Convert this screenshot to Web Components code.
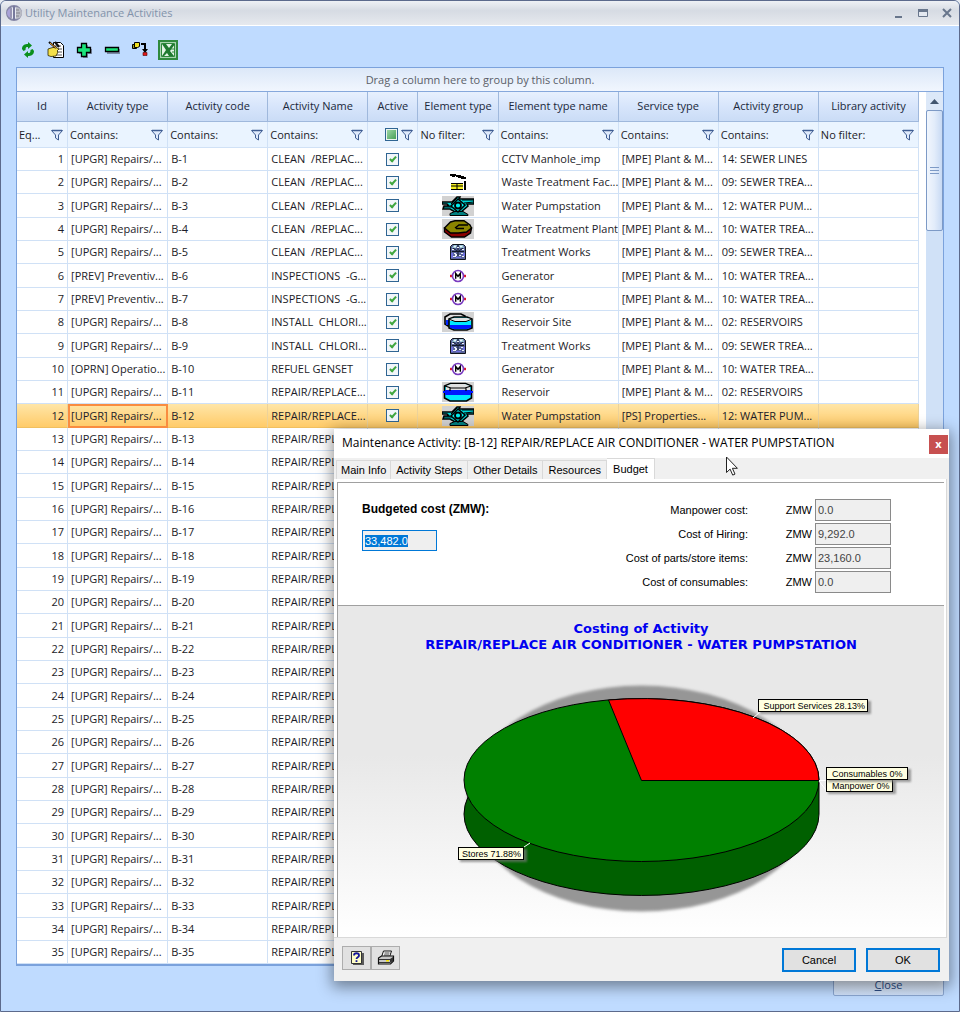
<!DOCTYPE html>
<html lang="en">
<head>
<meta charset="utf-8">
<title>Utility Maintenance Activities</title>
<style>
body { margin: 0; background: #e6ebf2; font: 11px/16px "Open Sans", "Noto Sans", sans-serif; color: #1c1c28; }
</style>
</head>
<body>
<app-window caption="Utility Maintenance Activities">
  <tool-bar></tool-bar>
  <activity-grid></activity-grid>
  <close-bar></close-bar>
</app-window>
<maintenance-dialog>
  <cost-form></cost-form>
  <cost-chart></cost-chart>
</maintenance-dialog>

<script>
function component(name, css, html, setup) {
  customElements.define(name, class extends HTMLElement {
    constructor() {
      super();
      this.attachShadow({ mode: "open" });
    }
    connectedCallback() {
      if (this.shadowRoot.childNodes.length) return;
      const t = document.createElement("template");
      t.innerHTML = "<style>*,:host{box-sizing:border-box}" + css + "</style>" + (typeof html === "function" ? html(this) : html);
      this.shadowRoot.append(t.content.cloneNode(true));
      if (setup) setup(this, this.shadowRoot);
    }
  });
}

/* ---------- icons ---------- */
const M_ICON = '<path stroke="#e01828" stroke-width="2.400" d="M0 8h16"/><circle cx="8" cy="8" r="5.500" fill="#fff" stroke="#7a3cc0" stroke-width="1.600"/><path fill="none" stroke="#000" stroke-width="1.400" d="M5.700 10.800V5.500L8 8.300l2.300-2.800v5.300"/>';
const WORKS = '<path fill="#59649a" stroke="#10141c" d="M.5 2.500l2-2h11l2 2v13H.5z"/><path fill="#a4d0dc" d="M2 4l2-3h3L6 4zM9 1h4l1 3h-4z"/><path stroke="#111827" fill="none" d="M8 0v12M3 4l4 3M13 4l-4 3M2 7.500h12"/><path fill="#eef2fa" d="M2 5h2v1H2zM12 5h2v1h-2zM4 2h2v1H4zM10 2h2v1h-2zM4 9h2v1H4zM5 10h2v2H5zM3 12h3v1H3zM11 9h2v1h-2zM9 11h2v1H9zM12 12h2v1h-2zM7 3h2v1H7z"/><path fill="#6f6fe0" d="M1 9h2v5H1zM13 9h2v3h-2zM6 13h5v1H6z"/>';
const ICONS = {
  waste: [16, 16, '<path d="M0 0h6v2H5v1H2V2H0zM6 1h5v1h3v1h2v2h-5V4H8V3H6zM14 7h2v9h-2z"/><path fill="#f4ee20" d="M1 9h12v6H1z"/><path fill="none" stroke="#000" d="M1 9.500h12M1 12h12M7 9v6M1 15.500h12"/>'],
  pump: [32, 20, '<path fill="#d2d2d2" d="M0 0h32v20H0z"/><path fill="#00d8d8" stroke="#000" stroke-width="1.500" d="M0 6h10L15 1h3l-1 2h15v5h-7l1 2-7 6h-6l-5-3H1l1-3h5L5 8H0z"/><path fill="#008080" stroke="#000" d="M8 19.500v-2l5-2h8l5 3v1z"/><path stroke="#000" fill="none" d="M20 4h12M9 8l6-6M22 7l10-1M2 11h8l4-6M14 6l6 3-3 5"/><path d="M16 3l7 6-7 7-7-6z" fill="#00f0f0" stroke="#000" stroke-width="1.600"/><circle cx="16" cy="9.500" r="3" fill="#00f0f0" stroke="#000" stroke-width="1.800"/>'],
  plant: [32, 20, '<path fill="#d2d2d2" d="M0 0h32v20H0z"/><path fill="#8b0000" stroke="#000" stroke-width="1.400" d="M2.500 9v4l7 5h13l6-4 1-5z"/><path fill="#8b8500" stroke="#000" stroke-width="1.400" d="M2.500 9l6-6L13 1.800h9L28 6l1.500 3-5 4-8 1h-8z"/><path fill="none" stroke="#000" stroke-width="1.400" d="M13 9l4-3h9M14 9.500h8"/>'],
  works: [16, 16, WORKS],
  generator: [16, 16, M_ICON],
  site: [32, 20, '<path fill="#d2d2d2" d="M0 0h32v20H0z"/><path fill="#e0e0e0" stroke="#000" stroke-width="1.600" d="M3 5l5-3h11l4 2v10H6l-3-2z"/><path fill="#0028ff" d="M4 8h3v5H4z"/><path fill="#00e8ff" stroke="#000" stroke-width="1.600" d="M7 7l5-2h13l5 2v9l-5 2H12l-5-2z"/><path fill="#e0e0e0" d="M8 7l4-1h13l4 1v2H8z"/><path fill="#0018ff" d="M8 13h21v3l-4 1H12l-4-1z"/><path fill="none" stroke="#000" d="M8 7.500l5 2h11l5-2"/>'],
  reservoir: [32, 20, '<path fill="#d2d2d2" d="M0 0h32v20H0z"/><path fill="#00e8ff" stroke="#000" stroke-width="1.600" d="M2.500 4l6-2.500h15l6 2.500v12l-5 3H8l-5.500-3z"/><path fill="#e0e0e0" d="M4 4l5-2h14l5 2v4H4z"/><path fill="#0018ff" d="M3 8h26v5H3zM1 9h30v2H1z"/><path fill="none" stroke="#000" stroke-width="1.200" d="M3 4l6 2h14l6-2M8 6v3M24 6v3"/>'],
  refresh: [14, 16, '<path fill="#0b8f1c" d="M1 7c0-4 3-5 6-5V0l4 3.500L7 7V5C5 5 4.500 5.500 4.500 8L2.500 9zM13 9c0 4-3 5-6 5v2l-4-3.500L7 9v2c2 0 2.500-.5 2.500-3l2-1z"/>'],
  edit: [18, 18, '<path fill="#fff" stroke="#000" d="M6.500 1.500h7l3 3v12h-10z"/><path stroke="#555" d="M8 5h6M9 8h6M10 11h5M9 14h6"/><path fill="#f4e04a" stroke="#2b2400" stroke-width=".8" d="M1 8l3-1 4-1 4 2-2 2 1 1-1 2-1 2-5 .500-3-1z"/><path stroke="#111" stroke-width="2.200" d="M2 1l7 6M8 1l4 5"/><path stroke="#f7a52a" stroke-width="1" d="M3 2l6 5"/>'],
  add: [18, 18, '<path fill="#7b8ba6" d="M8 4h5v4h4v5h-4v4H8v-4H4V8h4z"/><path fill="#1be37a" stroke="#000" stroke-width="1.300" d="M6.500 2.500h5v4h4v5h-4v4h-5v-4h-4v-5h4z"/>'],
  remove: [18, 18, '<path fill="#7b8ba6" d="M4 8h13v5H4z"/><path fill="#1be37a" stroke="#000" stroke-width="1.300" d="M2.500 6.500h13v4h-13z"/>'],
  move: [18, 18, '<path fill="#9a9a20" stroke="#000" d="M1.500 3.500h4v4h-4z"/><path fill="#f0e020" stroke="#000" d="M3.500 1.500h5v4l-2 1h-3z"/><path fill="none" stroke="#000" stroke-width="2" d="M10 3h4v7"/><path d="M11 8h6l-3 4z"/><path fill="#e01818" stroke="#500" stroke-width=".6" d="M12 11.500h4v3h-4z"/>'],
  excel: [20, 20, '<path fill="#a8d4b0" stroke="#2f8a3c" stroke-width="2" d="M1 1h18v18H1z"/><path fill="#e3f4e5" stroke="#2f8a3c" d="M3.500 3.500h13v13h-13z"/><path fill="#1f7a30" d="M4 4h4l3 4 3-4h3l-5 7 4 5h-5l-2-3-3 3H4l4-6z"/><path stroke="#2f8a3c" d="M13 9h3M14 12h3"/>'],
  filter: [12, 12, '<path fill="#dfeafb" stroke="#3f5d92" d="M.5 1.500h11L7.500 6v5l-3-2V6z"/><path stroke="#3f5d92" d="M1 1.500h10" stroke-width="1.400"/>'],
  help: [16, 16, '<path fill="#5a5a5a" d="M4 3h11v12H4z"/><path fill="#ffffc8" stroke="#333" d="M2.500 1.500h10v12h-10z"/><path fill="none" stroke="#16169a" stroke-width="1.800" d="M5 5.500c0-3 5-3 5 0 0 2-2.500 1.500-2.500 3.500"/><path fill="#16169a" d="M6.600 10.200h1.800V12H6.600z"/>'],
  print: [18, 16, '<path fill="#fff" stroke="#111" d="M6.500 1h8l-2 6h-8z"/><path stroke="#111" stroke-width=".8" d="M7.500 3h5M7 5h5"/><path fill="#c8c8c8" stroke="#111" stroke-width="1.200" d="M1.500 8l3-2h12v5l-3 3h-12z"/><path fill="#333" d="M2 9h11v1H2zM2 12h11v1H2zM13 9l3-2v4l-3 2z"/><path fill="#f5e400" d="M9 10h3v1.500H9z"/>']
};
component("ui-icon", ":host{display:inline-block;vertical-align:middle;line-height:0}svg{display:block}", el => {
  const [w, h, body] = ICONS[el.getAttribute("name")];
  return `<svg width="${w}" height="${h}" viewBox="0 0 ${w} ${h}" fill="#000" aria-hidden="true">${body}</svg>`;
});

/* ---------- main window ---------- */
component("app-window", `
:host{display:flex;flex-direction:column;min-height:100vh;border:1px solid #5c6a8c;border-radius:6px 6px 0 0;background:#bfdbff;overflow:hidden}
header{display:flex;align-items:center;height:25px;padding:0 4px 0 5px;background:linear-gradient(#eef1f5,#d6dbe3 40%,#e6e9ee);border-bottom:1px solid #fff;color:#8293ab}
h1{flex:1;margin:0 0 0 3px;font:inherit}
nav{display:flex;gap:8px}
nav button{width:16px;height:16px;padding:0;border:0;background:none}
nav svg{display:block;margin:auto}
main{flex:1;display:flex;flex-direction:column;padding:0 15px}
`, el => `<header>
<svg width="16" height="16" viewBox="0 0 16 16" aria-hidden="true"><circle cx="8" cy="8" r="7" fill="#e8eaf2" stroke="#8587a6" stroke-width="2"/><path d="M8 1v14" stroke="#77799c" stroke-width="2"/><path fill="#a9a2d8" d="M6 3a5 5 0 0 0 0 10z"/><path fill="#b9bbc4" d="M10 2a6 6 0 0 1 0 12z"/><path stroke="#85858f" fill="none" d="M10 5h3M10 8h4M10 11h3M5 3v10"/></svg>
<h1>${el.getAttribute("caption")}</h1>
<nav>
<button aria-label="Minimize"><svg width="10" height="10"><path fill="#68768c" d="M1 8h7v2H1z"/></svg></button>
<button aria-label="Maximize"><svg width="10" height="10"><path fill="#e3e8f0" stroke="#68768c" d="M.5 1.500h9v7h-9z"/><path fill="#68768c" d="M0 1h10v3H0z"/></svg></button>
<button aria-label="Close window"><svg width="10" height="10"><path stroke="#68768c" stroke-width="2" d="M1 1l8 8M9 1L1 9"/></svg></button>
</nav></header><main><slot></slot></main>`);

component("tool-bar", `
:host{display:flex;gap:8px;padding:13px 2px 6px}
button{display:flex;align-items:center;justify-content:center;width:20px;height:22px;padding:0;border:0;background:none}
`, [["refresh", "Refresh"], ["edit", "Edit"], ["add", "Add"], ["remove", "Remove"], ["move", "Move"], ["excel", "Export"]]
  .map(([n, l]) => `<button aria-label="${l}"><ui-icon name="${n}"></ui-icon></button>`).join(""));

const REP = "[UPGR] Repairs/...", PREV = "[PREV] Preventiv...", MPE = "[MPE] Plant & M...", RR = "REPAIR/REPLACE...";
const ROWS = [
  [REP, "CLEAN  /REPLAC...", "", "CCTV Manhole_imp", MPE, "14: SEWER LINES"],
  [REP, "CLEAN  /REPLAC...", "waste", "Waste Treatment Fac...", MPE, "09: SEWER TREA..."],
  [REP, "CLEAN  /REPLAC...", "pump", "Water Pumpstation", MPE, "12: WATER PUM..."],
  [REP, "CLEAN  /REPLAC...", "plant", "Water Treatment Plant", MPE, "10: WATER TREA..."],
  [REP, "CLEAN  /REPLAC...", "works", "Treatment Works", MPE, "09: SEWER TREA..."],
  [PREV, "INSPECTIONS  -G...", "generator", "Generator", MPE, "10: WATER TREA..."],
  [PREV, "INSPECTIONS  -G...", "generator", "Generator", MPE, "10: WATER TREA..."],
  [REP, "INSTALL  CHLORI...", "site", "Reservoir Site", MPE, "02: RESERVOIRS"],
  [REP, "INSTALL  CHLORI...", "works", "Treatment Works", MPE, "09: SEWER TREA..."],
  ["[OPRN] Operatio...", "REFUEL GENSET", "generator", "Generator", MPE, "10: WATER TREA..."],
  [REP, RR, "reservoir", "Reservoir", MPE, "02: RESERVOIRS"],
  [REP, RR, "pump", "Water Pumpstation", "[PS] Properties...", "12: WATER PUM..."]
];
while (ROWS.length < 35) ROWS.push([REP, "REPAIR/REPL", "", "", "", ""]);
const COLS = [["Id", 51, "Eq..."], ["Activity type", 100, "Contains:"], ["Activity code", 100, "Contains:"], ["Activity Name", 100, "Contains:"],
  ["Active", 50, null], ["Element type", 80, "No filter:"], ["Element type name", 120, "Contains:"], ["Service type", 100, "Contains:"],
  ["Activity group", 100, "Contains:"], ["Library activity", 100, "No filter:"]];
const esc = s => s.replace(/&/g, "&amp;");

component("activity-grid", `
:host{display:block;border:1px solid #7ba2dc;border-bottom-width:2px;background:#fff;overflow:hidden}
.group{height:24px;line-height:23px;text-align:center;color:#5b6068;background:linear-gradient(#dce8f8,#f1f6fe);border-bottom:1px solid #86a8dc}
.body{display:flex;gap:7px}
table{flex:1;min-width:0;width:100%;table-layout:fixed;border-collapse:separate;border-spacing:0}
th,td{padding:0 0 0 3px;border-right:1px solid #d0e1f6;border-bottom:1px solid #d0e1f6;overflow:hidden;white-space:pre;text-align:left;font-weight:400;line-height:20px}
thead th{height:30px;padding:0 0 2px;text-align:center;background:linear-gradient(#e7f0fe,#d7e5fb 50%,#cadcf6);border-color:#9fb8dc;color:#20283a}
thead td{height:26px;padding:0 4px 0 2px;background:#eaf4ff}
.f{display:flex;align-items:center;justify-content:space-between}
.f.mid{justify-content:flex-end;gap:3px}
.f button{flex:none;width:12px;height:12px;padding:0;border:0;background:none;line-height:0}
tbody tr{height:23px}
tbody tr:nth-child(3n){height:24px}
tbody td:first-child{text-align:right;padding:0 3px 0 0}
td.c{text-align:center;padding:0;line-height:0}
tr.sel{background:linear-gradient(#ffe6a8,#ffd98a 45%,#ffca66)}
tr.sel td{border-bottom-color:#f0c060;border-right-color:#ecd29a}
td.focus{outline:2px solid #f98c40;outline-offset:-2px}
input{appearance:none;display:inline-block;vertical-align:middle;position:relative;width:13px;height:13px;margin:0;border:1px solid #2f6593;background:#f2f6fa}
input:checked::before{content:"";position:absolute;left:4px;top:1px;width:2px;height:5px;border:solid #3fa63f;border-width:0 2px 2px 0;transform:rotate(42deg)}
input:indeterminate{background:linear-gradient(135deg,#a6dcae,#3e9a50);box-shadow:inset 0 0 0 1px #eef6f0}
.scroll{flex:none;width:17px;background:#d0e1f7}
.up{display:flex;align-items:center;justify-content:center;width:17px;height:18px;padding:0;border:0;background:#dce8f8}
.thumb{display:flex;align-items:center;justify-content:center;height:121px;border:1px solid #7d9ac6;border-radius:2px;background:linear-gradient(90deg,#f1f6fd,#e2ecfa 50%,#c8daf4)}
`, () => `<div class="group">Drag a column here to group by this column.</div>
<div class="body"><table>
<colgroup>${COLS.map(c => `<col style="width:${c[1]}px">`).join("")}</colgroup>
<thead><tr>${COLS.map(c => `<th scope="col">${c[0]}</th>`).join("")}</tr>
<tr>${COLS.map(c => `<td><div class="f${c[2] ? "" : " mid"}">${c[2] ? `<span>${c[2]}</span>` : '<input type="checkbox" class="any" aria-label="Filter active">'}<button aria-label="Filter ${c[0]}"><ui-icon name="filter"></ui-icon></button></div></td>`).join("")}</tr></thead>
<tbody>${ROWS.map((r, i) => `<tr${i === 11 ? ' class="sel"' : ""}><td>${i + 1}</td><td${i === 11 ? ' class="focus"' : ""}>${r[0]}</td><td>B-${i + 1}</td><td>${r[1]}</td><td class="c"><input type="checkbox" checked aria-label="Active ${i + 1}"></td><td class="c">${r[2] ? `<ui-icon name="${r[2]}"></ui-icon>` : ""}</td><td>${r[3]}</td><td>${esc(r[4])}</td><td>${r[5]}</td><td></td></tr>`).join("")}</tbody></table>
<div class="scroll"><button class="up" aria-label="Scroll up"><svg width="9" height="5"><path fill="#42566f" d="M4.500 0L9 5H0z"/></svg></button><div class="thumb"><svg width="9" height="7"><path stroke="#7d9ac6" d="M0 .500h9M0 3.500h9M0 6.500h9"/></svg></div></div></div>`,
(el, root) => { root.querySelector(".any").indeterminate = true; });

component("close-bar", `
:host{display:flex;justify-content:flex-end;padding:7px 0 15px}
button{width:111px;height:23px;padding:0;border:1px solid #8ba7d2;border-radius:2px;background:linear-gradient(#eaf2fd,#cfe1fa);color:#2c4d86;font:inherit}
`, `<button><u>C</u>lose</button>`);

/* ---------- dialog ---------- */
component("maintenance-dialog", `
:host{position:absolute;left:334px;right:11px;top:429px;background:#f0f0f0;box-shadow:0 4px 14px 2px rgba(0,0,0,.42);font:11px/16px "Liberation Sans",Arial,sans-serif;color:#000}
header{display:flex;align-items:center;height:29px;padding:0 1px 0 8px;background:#fff}
h2{flex:1;margin:0 0 2px;font:12px/26px "Open Sans","Noto Sans",sans-serif;white-space:nowrap}
.x{width:19px;height:19px;margin-top:1px;padding:0;border:0;background:#c75050;color:#fff;font:bold 11px/16px "Open Sans",sans-serif}
.tabs{display:flex;align-items:flex-end;height:21px;padding-left:2px}
.tabs button{height:19px;padding:0 5px;border:solid #d9d9d9;border-width:1px 1px 0 0;background:#f0f0f0;font:inherit;line-height:18px;color:#000;white-space:nowrap}
.tabs button:first-child{border-left-width:1px;padding:0 4px}
.tabs .on{height:21px;padding:0 6px;background:#fff}
.page{margin:0 2px 0 0;padding:3px 2px 0 3px;background:#fff;border:solid #d9d9d9;border-width:0 1px 1px 0}
.frame{border:solid #a0a0a0;border-width:1px 0 0 1px}
footer{display:flex;gap:10px;padding:8px 9px 9px 8px}
footer div{flex:1;display:flex}
footer div button{display:flex;align-items:center;justify-content:center;width:29px;height:24px;padding:0;border:1px solid #adadad;background:#e1e1e1}
footer>button{width:74px;height:24px;margin-top:2px;padding:0;border:2px solid #0078d7;background:#e1e1e1;font:inherit;color:#000}
.cursor{position:absolute;left:392px;top:27px}
`, `<header><h2>Maintenance Activity: [B-12] REPAIR/REPLACE AIR CONDITIONER - WATER PUMPSTATION</h2><button class="x" aria-label="Close dialog">x</button></header>
<div class="tabs" role="tablist"><button role="tab">Main Info</button><button role="tab">Activity Steps</button><button role="tab">Other Details</button><button role="tab">Resources</button><button role="tab" class="on" aria-selected="true">Budget</button></div>
<div class="page"><div class="frame"><slot></slot></div></div>
<footer><div><button aria-label="Help"><ui-icon name="help"></ui-icon></button><button aria-label="Print"><ui-icon name="print"></ui-icon></button></div><button>Cancel</button><button>OK</button></footer>
<svg class="cursor" width="13" height="21" aria-hidden="true"><path fill="#fff" stroke="#222" d="M.500 1v15.500l3.600-3.400 2.600 6 2.300-1-2.600-5.800h5z"/></svg>`);

component("cost-field", `
:host{display:grid;grid-template-columns:1fr 64px 3px 76px;align-items:center;height:22px}
label,span{text-align:right;white-space:nowrap}
input{grid-column:4;width:100%;height:22px;padding:0 2px;border:1px solid #8a8a8a;background:#efefef;color:#444;font:inherit}
`, el => `<label for="v">${el.getAttribute("label")}</label><span>ZMW</span><input id="v" value="${el.getAttribute("value")}" readonly>`);

component("cost-form", `
:host{display:flex;justify-content:space-between;height:123px;padding:16px 53px 0 24px;border-bottom:1px solid #a0a0a0}
label{display:block;font-weight:700;font-size:12px;line-height:20px}
.main{width:75px;height:21px;margin-top:11px;padding:0 2px;border:1px solid #0078d7;background:#efefef;font:inherit;outline:0;color:#000;display:block}
.main::selection{background:#0078d7;color:#fff}
.list{display:flex;flex-direction:column;gap:2px;width:270px}
`, `<div><label for="b">Budgeted cost (ZMW):</label><input id="b" class="main" value="33,482.0"></div>
<div class="list"><cost-field label="Manpower cost:" value="0.0"></cost-field><cost-field label="Cost of Hiring:" value="9,292.0"></cost-field><cost-field label="Cost of parts/store items:" value="23,160.0"></cost-field><cost-field label="Cost of consumables:" value="0.0"></cost-field></div>`,
(el, root) => { const b = root.querySelector(".main"); b.focus({ preventScroll: true }); b.select(); });

component("cost-chart", `
:host{display:block;padding-top:15px;background:linear-gradient(#e8e8e8 45%,#fff)}
h3{margin:0;text-align:center;color:#0000f0;font:bold 13px/16px "DejaVu Sans",Verdana,sans-serif}
svg{display:block;width:100%}
text{font:9px "Liberation Sans",Arial,sans-serif;fill:#000}
.tag{fill:#ffffe1;stroke:#000}
.sh{fill:#777;opacity:.7}
`, () => {
  const tag = (x, y, w, tx, s) => `<rect class="sh" x="${x + 2}" y="${y + 2}" width="${w + 1}" height="13" filter="url(#soft)"/><rect class="tag" x="${x + .5}" y="${y + .5}" width="${w - 1}" height="12"/><text x="${tx}" y="${y + 10}">${s}</text>`;
  return `<h3>Costing of Activity<br>REPAIR/REPLACE AIR CONDITIONER - WATER PUMPSTATION</h3>
<svg viewBox="338 653 606 284" role="img" aria-label="Costing pie chart">
<filter id="blur"><feGaussianBlur stdDeviation="1.500"/></filter><filter id="soft"><feGaussianBlur stdDeviation="1"/></filter>
<ellipse cx="641.500" cy="798.500" rx="174" ry="113" fill="#969696" filter="url(#blur)"/>
<path fill="#006000" stroke="#000" d="M819 780V814A177.500 81.500 0 0 1 464 814Q464 805 468 797z"/>
<ellipse cx="641.500" cy="780" rx="177.500" ry="81.500" fill="#008000" stroke="#000"/>
<path fill="#f00" stroke="#000" d="M641.500 780.500H819A177.500 81.500 0 0 0 608.500 700z"/>
<path stroke="#fff" fill="none" d="M753 718l7-6M819 780.500h8M819 781l7 9M524 847l6-4"/>
${tag(758, 699, 110, 763.5, "Support Services 28.13%")}${tag(826, 779, 67, 832, "Manpower 0%")}${tag(826, 767, 82, 832, "Consumables 0%")}${tag(458, 847, 66, 462, "Stores 71.88%")}
</svg>`;
});
</script>
</body>
</html>
